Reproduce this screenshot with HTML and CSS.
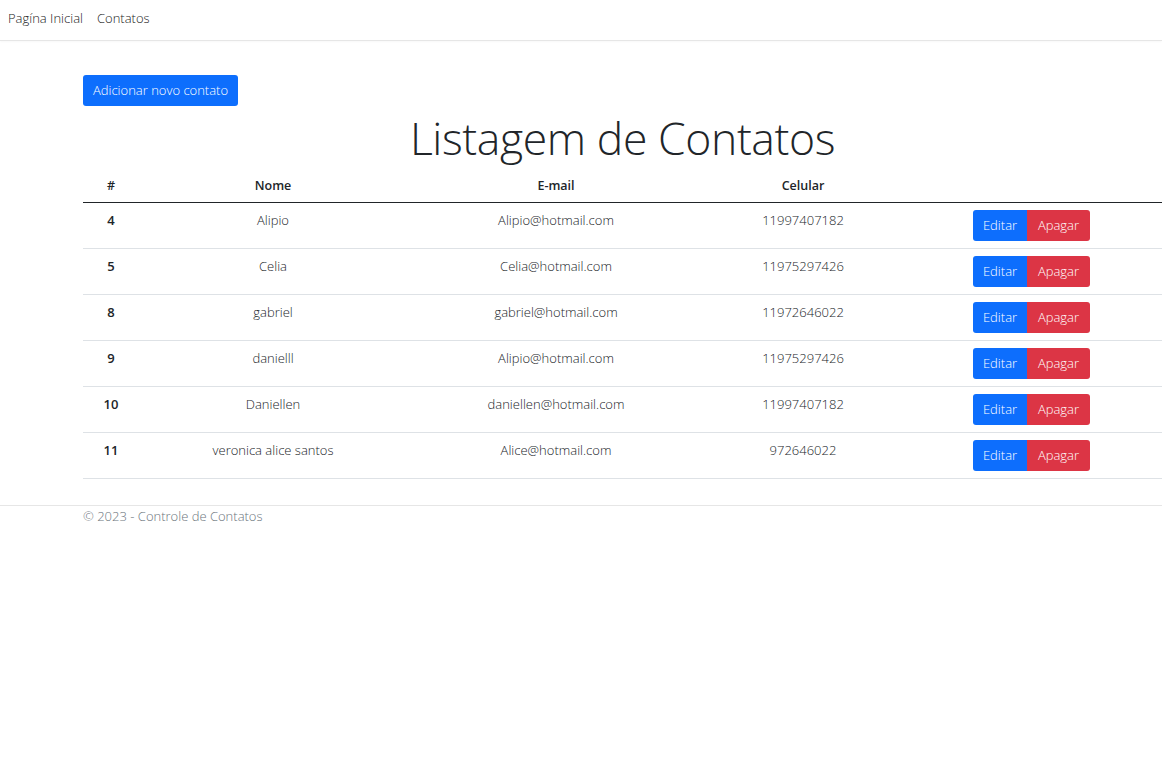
FILE: index.html
```html
<!DOCTYPE html>
<html lang="pt-BR">
<head>
<meta charset="utf-8">
<title>Listagem de Contatos</title>
<link rel="stylesheet" href="styles.css">
</head>
<body>
<header class="navbar">
  <nav class="nav-links">
    <a href="#" class="nav-link">Pagína Inicial</a>
    <a href="#" class="nav-link">Contatos</a>
  </nav>
</header>
<main class="main">
  <div class="toolbar">
    <a href="#" class="btn btn-primary btn-add">Adicionar novo contato</a>
  </div>
  <h1 class="title">Listagem de Contatos</h1>
  <table class="table">
    <colgroup>
      <col class="c-id"><col class="c-name"><col class="c-mail"><col class="c-phone"><col class="c-act">
    </colgroup>
    <thead>
      <tr><th>#</th><th>Nome</th><th>E-mail</th><th>Celular</th><th></th></tr>
    </thead>
    <tbody>
      <tr><th>4</th><td>Alipio</td><td>Alipio@hotmail.com</td><td>11997407182</td><td class="actions"><div class="btn-group"><a href="#" class="btn btn-primary">Editar</a><a href="#" class="btn btn-danger">Apagar</a></div></td></tr>
      <tr><th>5</th><td>Celia</td><td>Celia@hotmail.com</td><td>11975297426</td><td class="actions"><div class="btn-group"><a href="#" class="btn btn-primary">Editar</a><a href="#" class="btn btn-danger">Apagar</a></div></td></tr>
      <tr><th>8</th><td>gabriel</td><td>gabriel@hotmail.com</td><td>11972646022</td><td class="actions"><div class="btn-group"><a href="#" class="btn btn-primary">Editar</a><a href="#" class="btn btn-danger">Apagar</a></div></td></tr>
      <tr><th>9</th><td>danielll</td><td>Alipio@hotmail.com</td><td>11975297426</td><td class="actions"><div class="btn-group"><a href="#" class="btn btn-primary">Editar</a><a href="#" class="btn btn-danger">Apagar</a></div></td></tr>
      <tr><th>10</th><td>Daniellen</td><td>daniellen@hotmail.com</td><td>11997407182</td><td class="actions"><div class="btn-group"><a href="#" class="btn btn-primary">Editar</a><a href="#" class="btn btn-danger">Apagar</a></div></td></tr>
      <tr><th>11</th><td>veronica alice santos</td><td>Alice@hotmail.com</td><td>972646022</td><td class="actions"><div class="btn-group"><a href="#" class="btn btn-primary">Editar</a><a href="#" class="btn btn-danger">Apagar</a></div></td></tr>
    </tbody>
  </table>
</main>
<footer class="footer">
  <div class="footer-inner">© 2023 - Controle de Contatos</div>
</footer>
</body>
</html>
```
FILE: styles.css
```css
* { box-sizing: border-box; }
html, body { margin: 0; padding: 0; background: #fff; }
body {
  font-family: "Open Sans", "Noto Sans", sans-serif;
  font-weight: 300;
  font-size: 13px;
  color: #212529;
}
a { text-decoration: none; }

.navbar {
  height: 41px;
  border-bottom: 1px solid #e6e6e6;
  box-shadow: 0 1px 2px rgba(0,0,0,.03);
  display: flex;
  align-items: flex-start;
}
.nav-links {
  display: flex;
  gap: 14px;
  padding: 8px 0 0 8px;
}
.nav-link {
  color: #222;
  font-size: 13px;
  line-height: 20px;
}

.main {
  padding: 34px 0 0 83px;
}
.toolbar { display: flex; }

.btn {
  display: inline-flex;
  align-items: center;
  justify-content: center;
  height: 31px;
  padding: 0 10px;
  font-size: 13px;
  font-weight: 300;
  color: #fff;
  border-radius: 3px;
  line-height: 1;
}
.btn-primary { background: #0d6efd; }
.btn-danger { background: #dc3545; }
.btn-add { width: 155px; padding: 0; }

.title {
  margin: 0;
  text-align: center;
  font-size: 44.5px;
  font-weight: 300;
  line-height: 64px;
  color: #212529;
  letter-spacing: -0.4px;
}

.table {
  width: 100%;
  border-collapse: collapse;
  table-layout: fixed;
}
.c-id { width: 56px; }
.c-name { width: 268px; }
.c-mail { width: 298px; }
.c-phone { width: 196px; }
.c-act { width: auto; }

.table th, .table td {
  text-align: center;
  vertical-align: top;
  padding: 8px 8px 6px;
  line-height: 18px;
}
.table thead th {
  font-weight: 600;
  font-size: 12.5px;
  border-bottom: 1px solid #212529;
  padding: 7px 8px 7px;
  height: 32px;
}
.table tbody th {
  font-weight: 600;
}
.table tbody td, .table tbody th {
  border-bottom: 1px solid #dee2e6;
  height: 46px;
}
.table tbody td.actions { padding-top: 7px; padding-bottom: 7px; }

.btn-group { display: inline-flex; }
.btn-group .btn:first-child { border-radius: 3px 0 0 3px; width: 54px; padding: 0; }
.btn-group .btn:last-child { border-radius: 0 3px 3px 0; width: 63px; padding: 0; }

.footer {
  margin-top: 26px;
  border-top: 1px solid #e6e6e6;
}
.footer-inner {
  padding: 1px 0 0 83px;
  color: #6c757d;
  font-size: 13px;
  line-height: 18px;
}
```
